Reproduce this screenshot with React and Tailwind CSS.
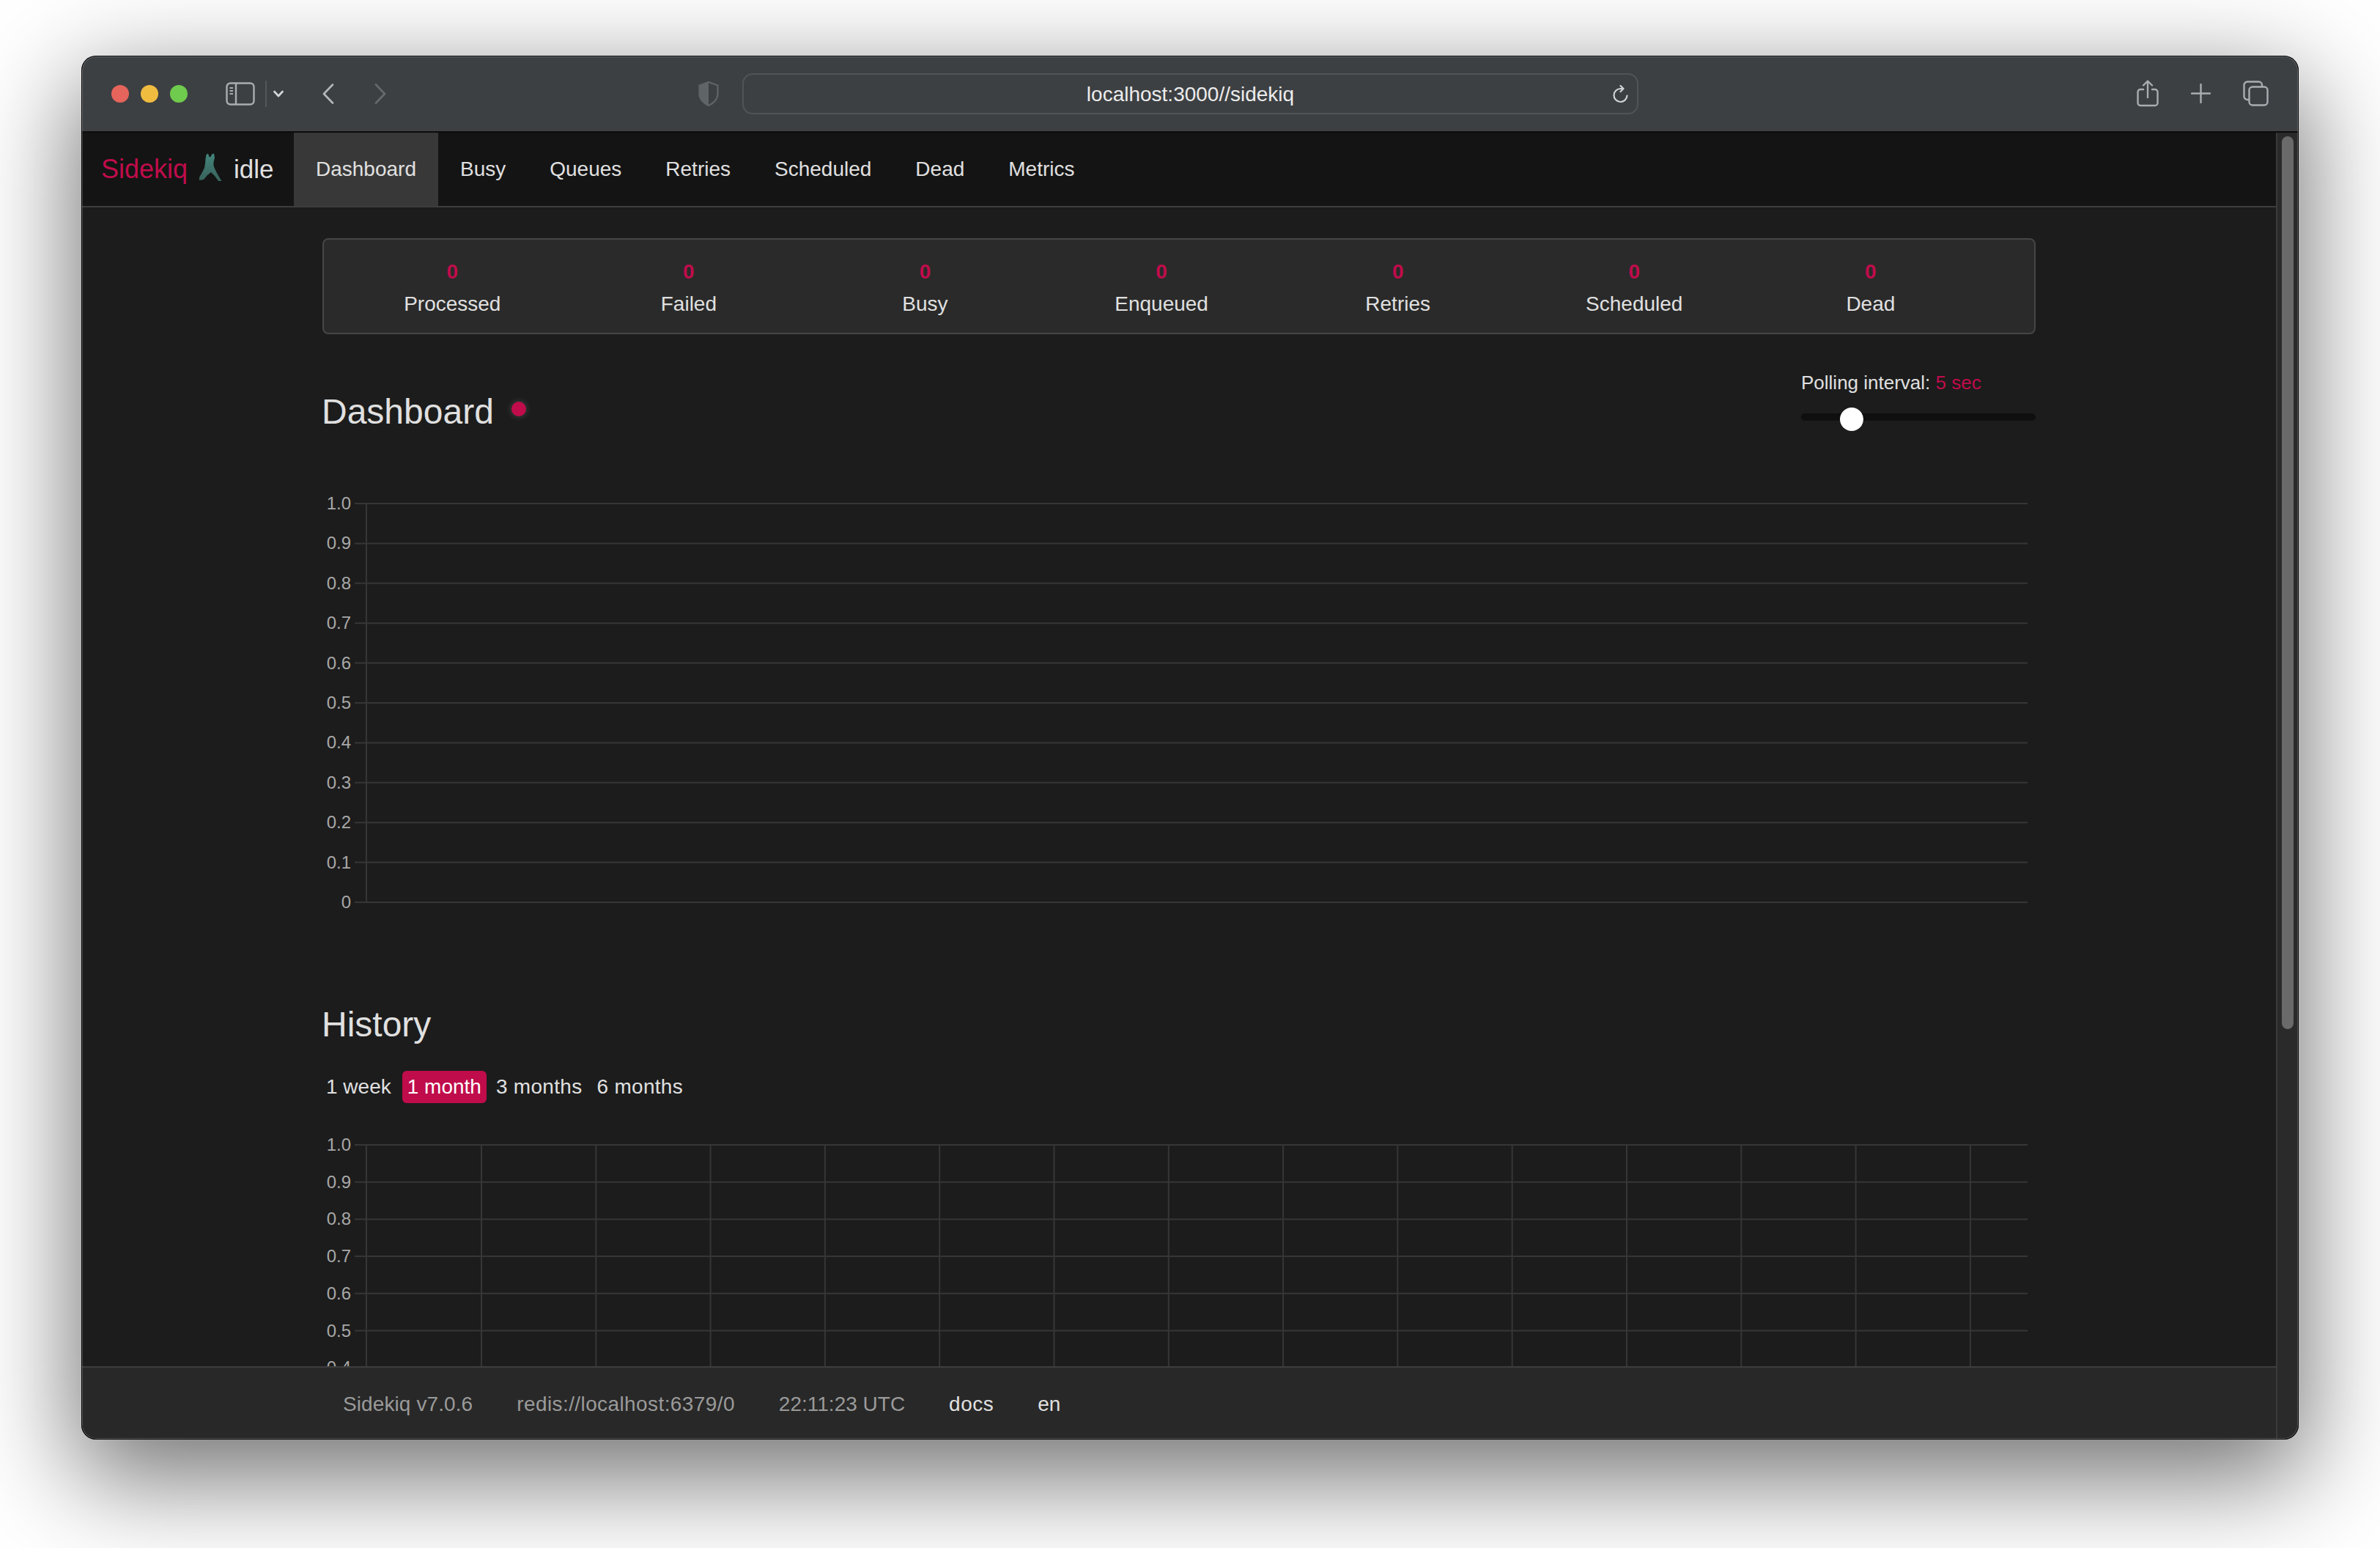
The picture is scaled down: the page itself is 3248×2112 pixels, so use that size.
import React from 'react';

const navItems = ['Busy', 'Queues', 'Retries', 'Scheduled', 'Dead', 'Metrics'];
const stats = ['Processed', 'Failed', 'Busy', 'Enqueued', 'Retries', 'Scheduled', 'Dead'];
const yLabels = ['1.0', '0.9', '0.8', '0.7', '0.6', '0.5', '0.4', '0.3', '0.2', '0.1', '0'];

function TrafficLights() {
  return (
    <div className="flex gap-4 ml-[41px]">
      <div className="w-6 h-6 rounded-full bg-[#e5645b]"></div>
      <div className="w-6 h-6 rounded-full bg-[#f0bc40]"></div>
      <div className="w-6 h-6 rounded-full bg-[#6fcb4d]"></div>
    </div>
  );
}

function SidebarIcon() {
  return (
    <svg width="40" height="32" viewBox="0 0 40 32" fill="none" stroke="#a9adb0" strokeWidth="2.4">
      <rect x="1.5" y="1.5" width="37" height="29" rx="5" />
      <path d="M14 2v28" />
      <path d="M5.5 8h4.5M5.5 12h4.5M5.5 16h4.5" strokeWidth="1.8" />
    </svg>
  );
}

function Chevron({ d, color }) {
  return (
    <svg width="16" height="28" viewBox="0 0 16 28" fill="none" stroke={color} strokeWidth="2.6" strokeLinecap="round" strokeLinejoin="round">
      <path d={d} />
    </svg>
  );
}

function Shield() {
  return (
    <svg width="28" height="34" viewBox="0 0 28 34">
      <path d="M14 1 L26.5 5.5 V17 C26.5 24 21 30 14 33 C7 30 1.5 24 1.5 17 V5.5 Z" fill="none" stroke="#5f6467" strokeWidth="2.2" />
      <path d="M14 1 L1.5 5.5 V17 C1.5 24 7 30 14 33 Z" fill="#5f6467" />
    </svg>
  );
}

function Reload() {
  return (
    <svg width="24" height="26" viewBox="0 0 24 26" fill="none" stroke="#d0d2d4" strokeWidth="2.2" strokeLinecap="round" strokeLinejoin="round">
      <path d="M20.5 14.5a9 9 0 1 1-8.8-9.5h3" />
      <path d="M11.5 1l4 4-4 4" />
    </svg>
  );
}

function ShareIcon() {
  return (
    <svg width="30" height="37" viewBox="0 0 30 37" fill="none" stroke="#a9adb0" strokeWidth="2.4" strokeLinecap="round" strokeLinejoin="round">
      <path d="M9 13H5a3.5 3.5 0 0 0-3.5 3.5v15A3.5 3.5 0 0 0 5 35h20a3.5 3.5 0 0 0 3.5-3.5v-15A3.5 3.5 0 0 0 25 13h-4" />
      <path d="M15 24V2M9 7.5L15 1.5l6 6" />
    </svg>
  );
}

function PlusIcon() {
  return (
    <svg width="27" height="27" viewBox="0 0 27 27" fill="none" stroke="#a9adb0" strokeWidth="2.4" strokeLinecap="round">
      <path d="M13.5 1v25M1 13.5h25" />
    </svg>
  );
}

function TabsIcon() {
  return (
    <svg width="35" height="35" viewBox="0 0 35 35" fill="none" stroke="#a9adb0" strokeWidth="2.4">
      <path d="M8 26H6a4.5 4.5 0 0 1-4.5-4.5V6A4.5 4.5 0 0 1 6 1.5h15.5A4.5 4.5 0 0 1 26 6v2" />
      <rect x="8.5" y="8.5" width="25" height="25" rx="4.5" />
    </svg>
  );
}

function TitleBar() {
  return (
    <div className="h-[105px] shrink-0 flex items-center bg-[#3d4043] border-b-2 border-[#0c0c0c] relative">
      <TrafficLights />
      <div className="ml-[52px]"><SidebarIcon /></div>
      <div className="w-[2px] h-9 bg-[#53575a] ml-[14px]"></div>
      <svg className="ml-[9px]" width="14" height="10" viewBox="0 0 14 10" fill="none" stroke="#d4d6d8" strokeWidth="2.6" strokeLinecap="round" strokeLinejoin="round">
        <path d="M1.5 2l5.5 6 5.5-6" />
      </svg>
      <div className="ml-[53px]"><Chevron d="M14 1.5L2 14l12 12.5" color="#b4b7b9" /></div>
      <div className="ml-[55px]"><Chevron d="M2 1.5L14 14 2 26.5" color="#666a6d" /></div>
      <div className="ml-[426px]"><Shield /></div>
      <div className="ml-[32px] w-[1223px] h-14 rounded-[14px] border-2 border-[#505457] flex items-center justify-center relative">
        <span className="mt-[3px] text-[28px] text-[#ececec]">localhost:3000//sidekiq</span>
        <div className="absolute right-[10px] top-[14px]"><Reload /></div>
      </div>
      <div className="ml-[680px]"><ShareIcon /></div>
      <div className="ml-[44px]"><PlusIcon /></div>
      <div className="ml-[44px]"><TabsIcon /></div>
    </div>
  );
}

function Logo() {
  return (
    <svg className="mx-[16px] mb-[6px]" width="31" height="38" viewBox="0 0 31 38">
      <defs>
        <linearGradient id="fig" x1="0" y1="0" x2="0" y2="1">
          <stop offset="0" stopColor="#43857b" />
          <stop offset="1" stopColor="#38615b" />
        </linearGradient>
      </defs>
      <path
        fill="url(#fig)"
        d="M9.5 2 L12 0.5 L13.5 5 L15.5 5 L17 1.5 L20 0.5 L21 6 L19.5 12 L19.5 17 L21 21 L25 29 L30.5 38 L26 38 L21 31 L16 26 L11 30 L6 36 L0 37 L0 33 L4 26 L7 20 L8 14 L8.5 8 Z"
      />
    </svg>
  );
}

function Nav() {
  return (
    <div className="h-[102px] shrink-0 flex bg-[#141414] border-b-2 border-[#3d3d3d]">
      <div className="w-[290px] shrink-0 pl-[27px] flex items-center">
        <span className="text-[36px] text-[#c00c4b]">Sidekiq</span>
        <Logo />
        <span className="text-[35px] text-[#e0e0e0]">idle</span>
      </div>
      <div className="px-[30px] flex items-center bg-[#383838] text-[28px] text-[#e0e0e0]">Dashboard</div>
      {navItems.map((item) => (
        <div key={item} className="px-[30px] flex items-center text-[28px] text-[#e0e0e0]">{item}</div>
      ))}
    </div>
  );
}

function SummaryBar() {
  return (
    <div className="mt-[42px] h-[131px] pl-[14px] pt-[24px] bg-[#2a2a2a] border-2 border-[#464646] rounded-[8px] grid grid-cols-[repeat(7,322.6px)]">
      {stats.map((s) => (
        <div key={s} className="flex flex-col items-center">
          <span className="text-[28px] leading-[40px] font-bold text-[#c00c4b]">0</span>
          <span className="mt-[2px] text-[28px] leading-[44px] text-[#e0e0e0]">{s}</span>
        </div>
      ))}
    </div>
  );
}

function Chart({ height, top, step, rows, className, grid }) {
  const bottom = top + 10 * step;
  return (
    <svg className={className} width="2338" height={height}>
      {yLabels.slice(0, rows).map((label, i) => {
        const y = top + i * step;
        return (
          <g key={label}>
            <line x1="44" x2="2327" y1={y} y2={y} stroke="#363636" strokeWidth="2" />
            <text x="39" y={y + 8} textAnchor="end" fontSize="24" fill="#a8a8a8">{label}</text>
          </g>
        );
      })}
      <line x1="60" x2="60" y1={top} y2={bottom} stroke="#363636" strokeWidth="2" />
      {grid && Array.from({ length: 14 }, (_, i) => (
        <line key={i} x1={217 + i * 156.3} x2={217 + i * 156.3} y1={top} y2={bottom} stroke="#363636" strokeWidth="2" />
      ))}
    </svg>
  );
}

function Main() {
  return (
    <div className="flex-1 min-h-0 overflow-hidden bg-[#1c1c1c] pl-[329px]">
      <div className="w-[2338px]">
        <SummaryBar />

        <div className="mt-[46px] flex justify-between items-start">
          <div className="mt-[32px] flex items-start -ml-[1px]">
            <h3 className="text-[48px] leading-[56px] text-[#e0e0e0]">Dashboard</h3>
            <div className="ml-[24px] mt-[14px] w-5 h-5 rounded-full bg-[#c00c4b] shadow-[0_0_10px_rgba(255,255,255,0.2)]"></div>
          </div>
          <div className="w-[320px]">
            <div className="text-[26px] leading-[40px] text-[#e0e0e0] whitespace-nowrap">
              Polling interval: <span className="text-[#c00c4b]">5 sec</span>
            </div>
            <div className="relative mt-[14px] h-8">
              <div className="absolute top-[8px] inset-x-0 h-[10px] rounded-[5px] bg-[#0f0f0f]"></div>
              <div className="absolute left-[53px] top-0 w-8 h-8 rounded-full bg-white"></div>
            </div>
          </div>
        </div>

        <Chart className="mt-[81px]" height={580} top={16} step={54.4} rows={11} />

        <h3 className="mt-[119px] -ml-[1px] text-[48px] leading-[56px] text-[#e0e0e0]">History</h3>

        <div className="mt-[35px] flex gap-[6px] text-[28px] text-[#e0e0e0]">
          <div className="h-11 pl-[5px] pr-[9px] flex items-center">1 week</div>
          <div className="h-11 px-[7px] flex items-center rounded-[6px] bg-[#c00c4b] text-white">1 month</div>
          <div className="h-11 px-[7px] flex items-center tracking-[0.3px]">3 months</div>
          <div className="h-11 pl-[7px] pr-[7px] flex items-center tracking-[0.3px]">6 months</div>
        </div>

        <Chart className="mt-[37px]" height={400} top={20} step={50.7} rows={7} grid />
      </div>
    </div>
  );
}

function Footer() {
  return (
    <div className="h-[100px] shrink-0 flex items-center pt-[2px] pl-[327px] bg-[#282828] border-t-2 border-[#3d3d3d] text-[28px] text-[#9a9a9a]">
      <span className="px-[30px] tracking-[0.1px]">Sidekiq v7.0.6</span>
      <span className="px-[30px] tracking-[0.4px]">redis://localhost:6379/0</span>
      <span className="px-[30px]">22:11:23 UTC</span>
      <span className="px-[30px] tracking-[0.5px] text-[#e0e0e0]">docs</span>
      <span className="px-[30px] text-[#e0e0e0]">en</span>
    </div>
  );
}

export default function App() {
  return (
    <div className="w-[3248px] h-[2112px] bg-white pt-[76px] pl-[111px] overflow-hidden font-['Liberation_Sans',sans-serif]">
      <div className="relative w-[3026px] h-[1888px] flex flex-col overflow-hidden rounded-[20px] bg-[#2a2a2a] shadow-[0_44px_140px_8px_rgba(0,0,0,0.56)]">
        <TitleBar />
        <div className="flex-1 min-h-0 flex">
          <div className="flex-1 min-w-0 flex flex-col">
            <Nav />
            <Main />
            <Footer />
          </div>
          <div className="w-[31px] shrink-0 bg-[#2a2a2a] border-l-2 border-[#3a3a3a] pl-[6px] pt-[5px]">
            <div className="w-4 h-[1218px] rounded-full bg-[#6a6a6a]"></div>
          </div>
        </div>
        {/* window edge: dark outline with a thin highlight inside */}
        <div className="absolute inset-0 rounded-[20px] border border-black shadow-[inset_0_0_0_1px_rgba(255,255,255,0.22)] pointer-events-none"></div>
      </div>
    </div>
  );
}
